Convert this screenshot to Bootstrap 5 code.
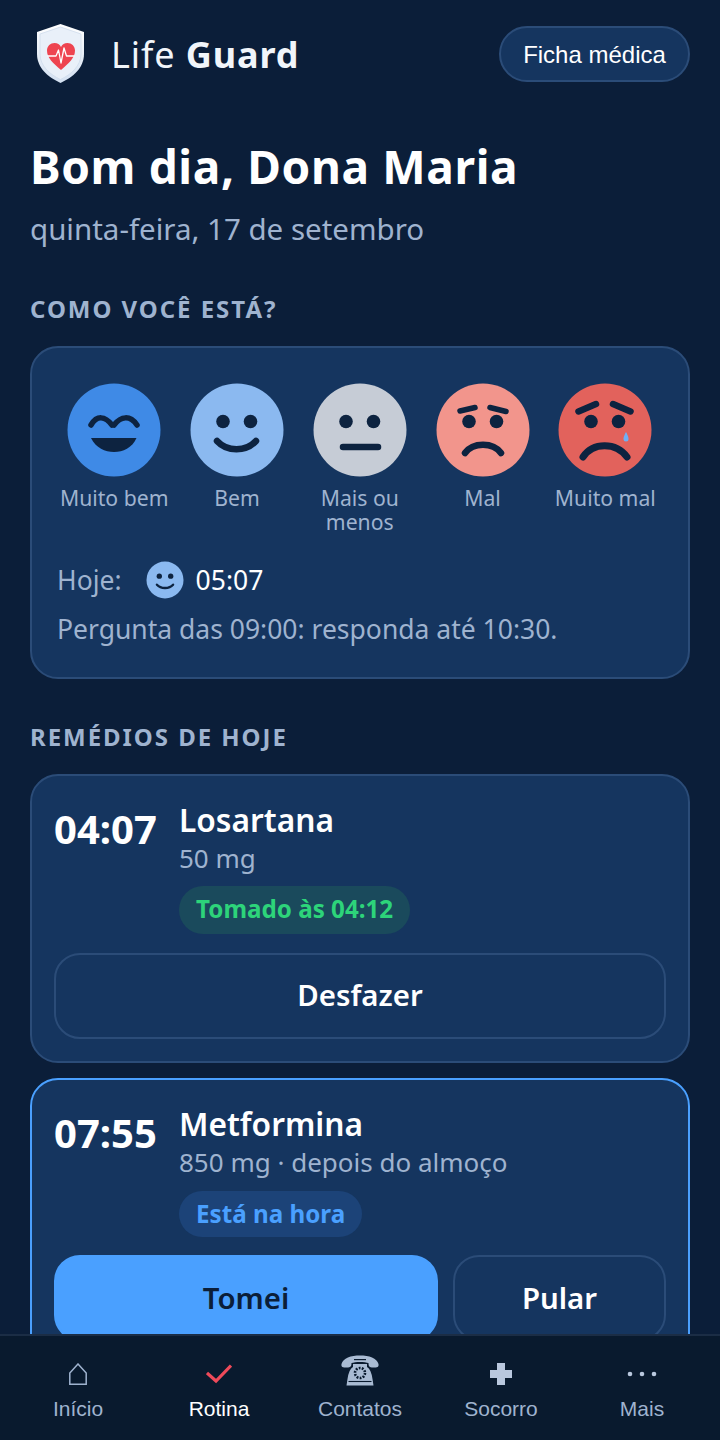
<!doctype html>
<html lang="pt-BR">
<head>
<meta charset="utf-8">
<title>Life Guard</title>
<link href="https://cdn.jsdelivr.net/npm/bootstrap@5.3.0/dist/css/bootstrap.min.css" rel="stylesheet">
<style>
html,body{height:100%;}
body{background:#0b1e39;color:#fff;font-family:"Noto Sans",sans-serif;overflow:hidden;}
.lg-page{height:1440px;overflow:hidden;padding:22px 30px 0;}
.lg-top{height:62px;}
.lg-logo{margin-left:6px;width:50px;height:62px;display:block;}
.lg-brand{font-size:36px;letter-spacing:.9px;line-height:1;margin:4px 0 0 25px;color:#f1f5fa;}
.lg-brand b{font-weight:700;}
.lg-record{margin-top:2px;width:191px;height:56px;border-radius:28px;background:#15355f;border:2px solid #2b4c78;color:#fff;font:24px "Liberation Sans",sans-serif;padding:1px 0 0;}
.lg-hello{font-size:46px;letter-spacing:.63px;font-weight:700;line-height:62px;margin:51px 0 0;}
.lg-date{font-size:29.5px;line-height:40px;color:#9fb3cf;margin-top:12px;}
.lg-sec{font-size:24px;font-weight:700;letter-spacing:1.95px;line-height:32px;color:#9fb3cf;margin:0;}
.lg-sec1{margin-top:44px;}
.lg-sec2{margin-top:42px;}
.lg-card{background:#15355f;border:2px solid #2b4c78;border-radius:28px;}
.lg-mood{margin-top:21px;padding:35px 25px 0;height:333px;}
.lg-faces{gap:8.4px;}
.lg-face{width:114.4px;flex:none;text-align:center;color:#9fb3cf;font-size:21.2px;line-height:24px;}
.lg-face svg{display:block;width:94px;height:94px;margin:0 auto 9px;}
.lg-today{font-size:26.5px;line-height:38px;margin-top:27px;color:#9fb3cf;}
.lg-today svg{width:38px;height:38px;margin:0 12px 0 24px;}
.lg-today span.lg-time{color:#fff;}
.lg-ask{font-size:26.5px;line-height:38px;color:#9fb3cf;margin-top:11px;}
.lg-med{padding:24px 22px;height:289px;margin-top:21px;}
.lg-med.lg-now{border-color:#4aa0ff;margin-top:15px;height:300px;}
.lg-hour{font-size:40px;font-weight:700;line-height:56px;width:125px;flex:none;margin-top:1px;}
.lg-name{font-size:31.7px;font-weight:600;line-height:42px;margin-top:-1px;}
.lg-dose{font-size:26px;line-height:35px;color:#9fb3cf;}
.lg-pill{display:inline-block;font-size:24.2px;font-weight:700;line-height:34px;padding:6px 17px 8px;border-radius:24px;margin-top:10px;}
.lg-pill-ok{background:#1a4a5c;color:#2dd47a;}
.lg-pill-now{background:#1c4378;color:#4aa0ff;padding:6px 17px;margin-top:11px;}
.lg-btn{height:86px;border-radius:26px;border:2px solid #2b4c78;background:transparent;color:#fff;font-size:29.4px;font-weight:600;padding:0;}
.lg-btn-undo{width:100%;margin-top:19px;padding-bottom:2px;}
.lg-row{margin-top:18px;gap:15px;}
.lg-btn-take{width:384px;background:#4aa0ff;border-color:#4aa0ff;color:#0b1e39;}
.lg-btn-skip{flex:1 1 auto;}
.lg-nav{position:fixed;left:0;right:0;bottom:0;height:106px;background:#091a2e;border-top:2px solid #1b2d45;}
.lg-tab{width:141px;flex:none;text-align:center;color:#9fb3cf;font:21px/26px "Liberation Sans",sans-serif;}
.lg-tab.lg-on{color:#fff;}
.lg-ico{height:40px;margin-top:18px;margin-bottom:2px;display:flex;align-items:center;justify-content:center;}
.lg-ico svg{display:block;}
.lg-ico svg.lg-phone{margin-top:-8px;}
</style>
</head>
<body>
<div class="lg-page">
  <header class="lg-top d-flex align-items-center">
    <svg class="lg-logo" viewBox="0 0 50 62" aria-hidden="true">
      <defs><linearGradient id="sh" x1="0" y1="0" x2="0" y2="1"><stop offset="0" stop-color="#ffffff"/><stop offset="1" stop-color="#d3e0f1"/></linearGradient></defs>
      <path d="M24.500 2 L48 10 V32 C48 46 37 55 24.500 61 C12 55 1 46 1 32 V10 Z" fill="url(#sh)"/>
      <path d="M24.500 5 L45 12 V32 C45 44 35 52.500 24.500 57.500 C14 52.500 4 44 4 32 V12 Z" fill="#e9f0f9" stroke="#cfdcec" stroke-width=".8"/>
      <path d="M25 48 C17 41 11 36 11 28.500 C11 24 14.500 21 18.500 21 C21.500 21 23.800 22.500 25 25 C26.200 22.500 28.500 21 31.500 21 C35.500 21 39 24 39 28.500 C39 36 33 41 25 48 Z" fill="#ee4450"/>
      <path d="M11.500 34 H20 L22.500 28 L25 41 L28 26 L30.500 34 H38.500" fill="none" stroke="#fff" stroke-width="1.300" stroke-linejoin="round"/>
    </svg>
    <div class="lg-brand">Life <b>Guard</b></div>
    <button type="button" class="btn lg-record ms-auto">Ficha médica</button>
  </header>

  <h1 class="lg-hello">Bom dia, Dona Maria</h1>
  <div class="lg-date">quinta-feira, 17 de setembro</div>

  <h2 class="lg-sec lg-sec1">COMO VOCÊ ESTÁ?</h2>
  <section class="lg-card lg-mood">
    <div class="d-flex lg-faces">
      <div class="lg-face">
        <svg viewBox="0 0 94 94"><circle cx="47" cy="47" r="46.500" fill="#3f8ae6"/><path d="M24 42 C30 32 38 33 45 42 M47 42 C54 33 63 32 70 42" fill="none" stroke="#0d2340" stroke-width="5.500" stroke-linecap="round"/><path d="M24 55 H69.500 C65 65 56 69 47 69 C38 69 29 65 24 55 Z" fill="#0d2340"/></svg>
        Muito bem
      </div>
      <div class="lg-face">
        <svg viewBox="0 0 94 94"><circle cx="47" cy="47" r="46.500" fill="#8bb9f0"/><circle cx="33" cy="38.500" r="6.800" fill="#0d2340"/><circle cx="60.500" cy="38.500" r="6.800" fill="#0d2340"/><path d="M27 58 C37 69 56 69 66 58" fill="none" stroke="#0d2340" stroke-width="6.500" stroke-linecap="round"/></svg>
        Bem
      </div>
      <div class="lg-face">
        <svg viewBox="0 0 94 94"><circle cx="47" cy="47" r="46.500" fill="#c6ccd6"/><circle cx="33" cy="38.500" r="6.800" fill="#0d2340"/><circle cx="60.500" cy="38.500" r="6.800" fill="#0d2340"/><path d="M30 64 H65" fill="none" stroke="#0d2340" stroke-width="6.500" stroke-linecap="round"/></svg>
        Mais ou menos
      </div>
      <div class="lg-face">
        <svg viewBox="0 0 94 94"><circle cx="47" cy="47" r="46.500" fill="#f2958c"/><path d="M24 28 L39 24.500 M54 24.500 L70 28.500" fill="none" stroke="#0d2340" stroke-width="5.500" stroke-linecap="round"/><circle cx="33" cy="38.500" r="6.800" fill="#0d2340"/><circle cx="60.500" cy="38.500" r="6.800" fill="#0d2340"/><path d="M29 70 C37 59 57 59 65 70" fill="none" stroke="#0d2340" stroke-width="6.500" stroke-linecap="round"/></svg>
        Mal
      </div>
      <div class="lg-face">
        <svg viewBox="0 0 94 94"><circle cx="47" cy="47" r="46.500" fill="#e2625c"/><path d="M20.500 28.500 L38 21 M55 21 L72.500 28.500" fill="none" stroke="#0d2340" stroke-width="6.500" stroke-linecap="round"/><circle cx="33" cy="38.500" r="6.800" fill="#0d2340"/><circle cx="60.500" cy="38.500" r="6.800" fill="#0d2340"/><path d="M25 74 C35 59 58 59 69 74" fill="none" stroke="#0d2340" stroke-width="7" stroke-linecap="round"/><path d="M68 49 C66 53 65.500 54 65.500 56 A2.500 2.500 0 0 0 70.500 56 C70.500 54 70 53 68 49 Z" fill="#6fb0f5"/></svg>
        Muito mal
      </div>
    </div>
    <div class="lg-today d-flex align-items-center">Hoje:
      <svg viewBox="0 0 40 40"><circle cx="20" cy="20" r="19.500" fill="#8bb9f0"/><circle cx="14" cy="16" r="2.800" fill="#0d2340"/><circle cx="26" cy="16" r="2.800" fill="#0d2340"/><path d="M11.500 25 C15.500 29.500 24.500 29.500 28.500 25" fill="none" stroke="#0d2340" stroke-width="2.500" stroke-linecap="round"/></svg>
      <span class="lg-time">05:07</span>
    </div>
    <div class="lg-ask">Pergunta das 09:00: responda até 10:30.</div>
  </section>

  <h2 class="lg-sec lg-sec2">REMÉDIOS DE HOJE</h2>
  <article class="lg-card lg-med">
    <div class="d-flex">
      <div class="lg-hour">04:07</div>
      <div>
        <div class="lg-name">Losartana</div>
        <div class="lg-dose">50 mg</div>
        <span class="lg-pill lg-pill-ok">Tomado às 04:12</span>
      </div>
    </div>
    <button type="button" class="btn lg-btn lg-btn-undo">Desfazer</button>
  </article>
  <article class="lg-card lg-med lg-now">
    <div class="d-flex">
      <div class="lg-hour">07:55</div>
      <div>
        <div class="lg-name">Metformina</div>
        <div class="lg-dose">850 mg · depois do almoço</div>
        <span class="lg-pill lg-pill-now">Está na hora</span>
      </div>
    </div>
    <div class="d-flex lg-row">
      <button type="button" class="btn lg-btn lg-btn-take">Tomei</button>
      <button type="button" class="btn lg-btn lg-btn-skip">Pular</button>
    </div>
  </article>
</div>

<nav class="lg-nav d-flex justify-content-center">
  <a class="lg-tab text-decoration-none" href="#"><div class="lg-ico"><svg width="18" height="22" viewBox="0 0 18 22"><path d="M9 1 L17.200 10 V21.200 H.8 V10 Z" fill="none" stroke="#9fb3cf" stroke-width="1.500"/></svg></div>Início</a>
  <a class="lg-tab lg-on text-decoration-none" href="#"><div class="lg-ico"><svg width="26" height="20" viewBox="0 0 26 20"><path d="M1 9 L10 17 L25 1.500" fill="none" stroke="#ee4a5a" stroke-width="3.200"/></svg></div>Rotina</a>
  <a class="lg-tab text-decoration-none" href="#"><div class="lg-ico"><svg class="lg-phone" width="38" height="31" viewBox="0 0 38 31"><path d="M.5 9 C2 3 10 .5 19 .5 C28 .5 36 3 37.500 9 C38 12 36.500 12.500 32 12.500 C28.500 12.500 27.500 11.500 27.500 8 C24 6.500 14 6.500 10.500 8 C10.500 11.500 9.500 12.500 6 12.500 C1.500 12.500 0 12 .5 9 Z" fill="#a9bbd3"/><path d="M12 9 H26 V12 Q30 14 31.500 24 L32.500 30.500 H5.500 L6.500 24 Q8 14 12 12 Z" fill="#a9bbd3"/><path d="M13 4 H25 V5.200 H13 Z" fill="#091a2e"/><circle cx="19" cy="18" r="5" fill="none" stroke="#091a2e" stroke-width="2.600" stroke-dasharray="1.800 1.300"/><path d="M7.500 26.500 H30.500" stroke="#091a2e" stroke-width="1.100"/></svg></div>Contatos</a>
  <a class="lg-tab text-decoration-none" href="#"><div class="lg-ico"><svg width="22" height="22" viewBox="0 0 22 22"><path d="M7 0 H15 V7 H22 V15 H15 V22 H7 V15 H0 V7 H7 Z" fill="#b9c8de"/></svg></div>Socorro</a>
  <a class="lg-tab text-decoration-none" href="#"><div class="lg-ico"><svg width="30" height="6" viewBox="0 0 30 6"><circle cx="3" cy="3" r="2.300" fill="#b9c8de"/><circle cx="15" cy="3" r="2.300" fill="#b9c8de"/><circle cx="27" cy="3" r="2.300" fill="#b9c8de"/></svg></div>Mais</a>
</nav>
<script src="https://cdn.jsdelivr.net/npm/bootstrap@5.3.0/dist/js/bootstrap.bundle.min.js"></script>
</body>
</html>
